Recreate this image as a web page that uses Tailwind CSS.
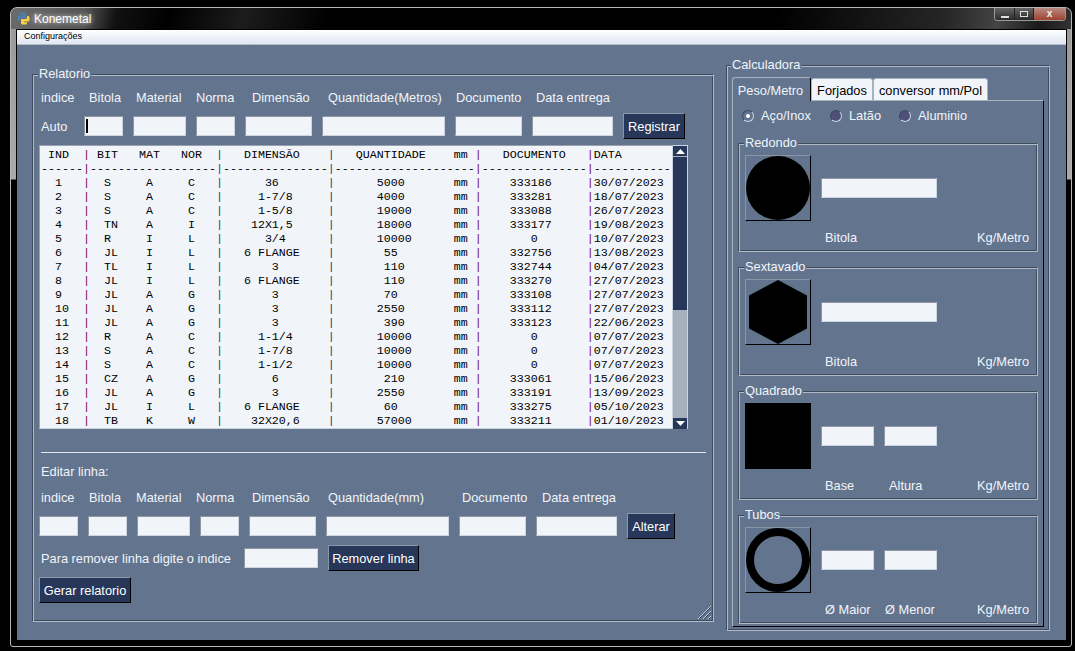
<!DOCTYPE html>
<html>
<head>
<meta charset="utf-8">
<script src="https://cdn.jsdelivr.net/npm/@tailwindcss/browser@4"></script>
</head>
<body class="bg-black">
<div class="w-[1075px] h-[651px] overflow-hidden bg-black pt-[7px] pl-[10px] font-['Liberation_Sans',sans-serif] text-[12.8px] text-slate-100">
  <div class="w-[1062px] h-[640px] border border-[#b5b5b5] rounded-t-[7px] rounded-b-[3px] px-[5px] pb-[4px] bg-[linear-gradient(180deg,#999_0,#aaa_171px,#000_172px)]">
    <!-- title bar -->
    <div class="-mx-[5px] h-[21px] rounded-t-[6px] flex items-center pl-[6px] bg-[linear-gradient(100deg,#6b6b6b_0%,#555_7%,#111_10%,#000_15%,#1c1c1c_22%,#000_30%,#000_72%,#262626_88%,#444_93%,#1a1a1a_97%,#333_100%)]">
      <svg width="13" height="13" viewBox="0 0 13 13" class="shrink-0">
        <path d="M4 .5h3.5A1.5 1.5 0 0 1 9 2v4H4.5A1.5 1.5 0 0 0 3 7.5V9H2A1.5 1.5 0 0 1 .5 7.5V5A1.5 1.5 0 0 1 2 3.5h4v-.7H3V1.5A1 1 0 0 1 4 .5z" fill="#4a7fb0"/>
        <path d="M9 12.5H5.5A1.5 1.5 0 0 1 4 11V7h4.5A1.5 1.5 0 0 0 10 5.500V4h1A1.500 1.500 0 0 1 12.500 5.500V8A1.500 1.500 0 0 1 11 9.500H7v.7h3v1.300A1 1 0 0 1 9 12.500z" fill="#f7d14a"/>
      </svg>
      <span class="ml-[4px] text-[12px] text-white [text-shadow:0_0_5px_#fff]">Konemetal</span>
      <div class="ml-auto mr-[5px] -mt-[8px] h-[13px] w-[72px] flex border border-t-0 border-[#999] rounded-b-[4px] overflow-hidden">
        <div class="w-[20px] flex items-end justify-center pb-[2px] bg-[linear-gradient(180deg,#666,#2a2a2a)] border-r border-[#222]"><div class="w-[8px] h-[2px] bg-[#ddd]"></div></div>
        <div class="w-[19px] flex items-center justify-center bg-[linear-gradient(180deg,#666,#2a2a2a)] border-r border-[#222]"><div class="w-[8px] h-[6px] border border-[#ddd]"></div></div>
        <div class="flex-1 flex items-center justify-center bg-[linear-gradient(180deg,#b98a80,#a04030)] text-[10px] leading-none font-bold text-[#eee]">x</div>
      </div>
    </div>
    <!-- client -->
    <div class="w-[1051px] h-[612px] border border-black bg-slate-500">
      <div class="h-[15px] flex items-center pl-[7px] text-[9px] text-black bg-[linear-gradient(180deg,#fff,#dfe6f3)] border-b border-[#b8bcc4]">Configurações</div>
      <div class="flex items-start pl-[15px]">

        <!-- Relatorio -->
        <div class="relative mt-[29px] w-[682px] h-[548px] border border-t-[#3f4a5a] border-l-[#3f4a5a] border-r-[#b0bac8] border-b-[#b0bac8] shadow-[inset_1px_1px_0_#b0bac8,inset_-1px_-1px_0_#3f4a5a] p-[1px] pl-[6px]">
          <span class="absolute left-[5px] -top-[9px] bg-slate-500 px-px leading-[16px]">Relatorio</span>

          <div class="flex h-[20px] pt-[2px] mt-[11px] ml-[2px] items-center">
            <span class="w-[48px]">indice</span><span class="w-[47px]">Bitola</span><span class="w-[60px]">Material</span><span class="w-[56px]">Norma</span><span class="w-[76px]">Dimensão</span><span class="w-[128px]">Quantidade(Metros)</span><span class="w-[80px]">Documento</span><span>Data entrega</span>
          </div>

          <div class="flex h-[26px] mt-[6px] items-center gap-[10px]">
            <span class="ml-[2px] w-[33px] pt-[2px]">Auto</span>
            <div class="w-[39px] h-[20px] border border-t-[#8f96a1] border-l-[#8f96a1] border-r-[#cbd5e1] border-b-[#cbd5e1] bg-slate-100 pl-px py-[2px]"><div class="w-[2px] h-full bg-black"></div></div>
            <div class="w-[53px] h-[20px] border border-t-[#8f96a1] border-l-[#8f96a1] border-r-[#cbd5e1] border-b-[#cbd5e1] bg-slate-100"></div>
            <div class="w-[39px] h-[20px] border border-t-[#8f96a1] border-l-[#8f96a1] border-r-[#cbd5e1] border-b-[#cbd5e1] bg-slate-100"></div>
            <div class="w-[67px] h-[20px] border border-t-[#8f96a1] border-l-[#8f96a1] border-r-[#cbd5e1] border-b-[#cbd5e1] bg-slate-100"></div>
            <div class="w-[123px] h-[20px] border border-t-[#8f96a1] border-l-[#8f96a1] border-r-[#cbd5e1] border-b-[#cbd5e1] bg-slate-100"></div>
            <div class="w-[67px] h-[20px] border border-t-[#8f96a1] border-l-[#8f96a1] border-r-[#cbd5e1] border-b-[#cbd5e1] bg-slate-100"></div>
            <div class="w-[81px] h-[20px] border border-t-[#8f96a1] border-l-[#8f96a1] border-r-[#cbd5e1] border-b-[#cbd5e1] bg-slate-100"></div>
            <button class="w-[62px] h-[26px] pt-[2px] border border-t-[#8a96a8] border-l-[#8a96a8] border-r-black border-b-black bg-[#27375a] text-white">Registrar</button>
          </div>

          <div class="flex mt-[6px] h-[284px]">
            <pre class="w-[634px] h-full overflow-hidden border border-t-[#98a2b0] border-l-[#98a2b0] border-r-[#cbd5e1] border-b-[#cbd5e1] bg-slate-100 pl-px pt-[2px] font-['Liberation_Mono',monospace] text-[11.67px] leading-[14px] text-black"> IND  <span class="text-[#7a0f4f]">|</span> BIT   MAT   NOR  <span class="text-[#0f4f6f]">|</span>   DIMENSÃO    <span class="text-[#0f4f6f]">|</span>   QUANTIDADE    mm <span class="text-[#7a0f4f]">|</span>   DOCUMENTO   <span class="text-[#7a0f4f]">|</span>DATA
------<span class="text-[#7a0f4f]">|</span>------------------<span class="text-[#0f4f6f]">|</span>---------------<span class="text-[#0f4f6f]">|</span>--------------------<span class="text-[#7a0f4f]">|</span>---------------<span class="text-[#7a0f4f]">|</span>-----------
  1   <span class="text-[#7a0f4f]">|</span>  S     A     C   <span class="text-[#0f4f6f]">|</span>      36       <span class="text-[#0f4f6f]">|</span>      5000       mm <span class="text-[#7a0f4f]">|</span>    333186     <span class="text-[#7a0f4f]">|</span>30/07/2023
  2   <span class="text-[#7a0f4f]">|</span>  S     A     C   <span class="text-[#0f4f6f]">|</span>     1-7/8     <span class="text-[#0f4f6f]">|</span>      4000       mm <span class="text-[#7a0f4f]">|</span>    333281     <span class="text-[#7a0f4f]">|</span>18/07/2023
  3   <span class="text-[#7a0f4f]">|</span>  S     A     C   <span class="text-[#0f4f6f]">|</span>     1-5/8     <span class="text-[#0f4f6f]">|</span>      19000      mm <span class="text-[#7a0f4f]">|</span>    333088     <span class="text-[#7a0f4f]">|</span>26/07/2023
  4   <span class="text-[#7a0f4f]">|</span>  TN    A     I   <span class="text-[#0f4f6f]">|</span>    12X1,5     <span class="text-[#0f4f6f]">|</span>      18000      mm <span class="text-[#7a0f4f]">|</span>    333177     <span class="text-[#7a0f4f]">|</span>19/08/2023
  5   <span class="text-[#7a0f4f]">|</span>  R     I     L   <span class="text-[#0f4f6f]">|</span>      3/4      <span class="text-[#0f4f6f]">|</span>      10000      mm <span class="text-[#7a0f4f]">|</span>       0       <span class="text-[#7a0f4f]">|</span>10/07/2023
  6   <span class="text-[#7a0f4f]">|</span>  JL    I     L   <span class="text-[#0f4f6f]">|</span>   6 FLANGE    <span class="text-[#0f4f6f]">|</span>       55        mm <span class="text-[#7a0f4f]">|</span>    332756     <span class="text-[#7a0f4f]">|</span>13/08/2023
  7   <span class="text-[#7a0f4f]">|</span>  TL    I     L   <span class="text-[#0f4f6f]">|</span>       3       <span class="text-[#0f4f6f]">|</span>       110       mm <span class="text-[#7a0f4f]">|</span>    332744     <span class="text-[#7a0f4f]">|</span>04/07/2023
  8   <span class="text-[#7a0f4f]">|</span>  JL    I     L   <span class="text-[#0f4f6f]">|</span>   6 FLANGE    <span class="text-[#0f4f6f]">|</span>       110       mm <span class="text-[#7a0f4f]">|</span>    333270     <span class="text-[#7a0f4f]">|</span>27/07/2023
  9   <span class="text-[#7a0f4f]">|</span>  JL    A     G   <span class="text-[#0f4f6f]">|</span>       3       <span class="text-[#0f4f6f]">|</span>       70        mm <span class="text-[#7a0f4f]">|</span>    333108     <span class="text-[#7a0f4f]">|</span>27/07/2023
  10  <span class="text-[#7a0f4f]">|</span>  JL    A     G   <span class="text-[#0f4f6f]">|</span>       3       <span class="text-[#0f4f6f]">|</span>      2550       mm <span class="text-[#7a0f4f]">|</span>    333112     <span class="text-[#7a0f4f]">|</span>27/07/2023
  11  <span class="text-[#7a0f4f]">|</span>  JL    A     G   <span class="text-[#0f4f6f]">|</span>       3       <span class="text-[#0f4f6f]">|</span>       390       mm <span class="text-[#7a0f4f]">|</span>    333123     <span class="text-[#7a0f4f]">|</span>22/06/2023
  12  <span class="text-[#7a0f4f]">|</span>  R     A     C   <span class="text-[#0f4f6f]">|</span>     1-1/4     <span class="text-[#0f4f6f]">|</span>      10000      mm <span class="text-[#7a0f4f]">|</span>       0       <span class="text-[#7a0f4f]">|</span>07/07/2023
  13  <span class="text-[#7a0f4f]">|</span>  S     A     C   <span class="text-[#0f4f6f]">|</span>     1-7/8     <span class="text-[#0f4f6f]">|</span>      10000      mm <span class="text-[#7a0f4f]">|</span>       0       <span class="text-[#7a0f4f]">|</span>07/07/2023
  14  <span class="text-[#7a0f4f]">|</span>  S     A     C   <span class="text-[#0f4f6f]">|</span>     1-1/2     <span class="text-[#0f4f6f]">|</span>      10000      mm <span class="text-[#7a0f4f]">|</span>       0       <span class="text-[#7a0f4f]">|</span>07/07/2023
  15  <span class="text-[#7a0f4f]">|</span>  CZ    A     G   <span class="text-[#0f4f6f]">|</span>       6       <span class="text-[#0f4f6f]">|</span>       210       mm <span class="text-[#7a0f4f]">|</span>    333061     <span class="text-[#7a0f4f]">|</span>15/06/2023
  16  <span class="text-[#7a0f4f]">|</span>  JL    A     G   <span class="text-[#0f4f6f]">|</span>       3       <span class="text-[#0f4f6f]">|</span>      2550       mm <span class="text-[#7a0f4f]">|</span>    333191     <span class="text-[#7a0f4f]">|</span>13/09/2023
  17  <span class="text-[#7a0f4f]">|</span>  JL    I     L   <span class="text-[#0f4f6f]">|</span>   6 FLANGE    <span class="text-[#0f4f6f]">|</span>       60        mm <span class="text-[#7a0f4f]">|</span>    333275     <span class="text-[#7a0f4f]">|</span>05/10/2023
  18  <span class="text-[#7a0f4f]">|</span>  TB    K     W   <span class="text-[#0f4f6f]">|</span>    32X20,6    <span class="text-[#0f4f6f]">|</span>      57000      mm <span class="text-[#7a0f4f]">|</span>    333211     <span class="text-[#7a0f4f]">|</span>01/10/2023</pre>
            <div class="w-[15px] h-full flex flex-col bg-[#a6b0be] border-r border-[#cbd5e1]">
              <div class="h-[11px] bg-[#27375a] border-t border-[#cbd5e1] flex items-center justify-center"><svg width="9" height="5"><path d="M0 5L4.500 0L9 5z" fill="#fff"/></svg></div>
              <div class="h-[153px] mt-px bg-[#27375a]"></div>
              <div class="flex-1"></div>
              <div class="h-[11px] bg-[#27375a] flex items-center justify-center"><svg width="9" height="5"><path d="M0 0L4.500 5L9 0z" fill="#fff"/></svg></div>
            </div>
          </div>

          <div class="mt-[23px] ml-[2px] w-[665px] h-px bg-slate-200"></div>
          <div class="h-[20px] pt-[2px] mt-[8px] ml-[2px] flex items-center">Editar linha:</div>

          <div class="flex h-[20px] pt-[2px] mt-[6px] ml-[2px] items-center">
            <span class="w-[48px]">indice</span><span class="w-[47px]">Bitola</span><span class="w-[60px]">Material</span><span class="w-[56px]">Norma</span><span class="w-[76px]">Dimensão</span><span class="w-[134px]">Quantidade(mm)</span><span class="w-[80px]">Documento</span><span>Data entrega</span>
          </div>

          <div class="flex h-[26px] mt-[6px] items-center gap-[10px]">
            <div class="w-[39px] h-[20px] border border-t-[#8f96a1] border-l-[#8f96a1] border-r-[#cbd5e1] border-b-[#cbd5e1] bg-slate-100"></div>
            <div class="w-[39px] h-[20px] border border-t-[#8f96a1] border-l-[#8f96a1] border-r-[#cbd5e1] border-b-[#cbd5e1] bg-slate-100"></div>
            <div class="w-[53px] h-[20px] border border-t-[#8f96a1] border-l-[#8f96a1] border-r-[#cbd5e1] border-b-[#cbd5e1] bg-slate-100"></div>
            <div class="w-[39px] h-[20px] border border-t-[#8f96a1] border-l-[#8f96a1] border-r-[#cbd5e1] border-b-[#cbd5e1] bg-slate-100"></div>
            <div class="w-[67px] h-[20px] border border-t-[#8f96a1] border-l-[#8f96a1] border-r-[#cbd5e1] border-b-[#cbd5e1] bg-slate-100"></div>
            <div class="w-[123px] h-[20px] border border-t-[#8f96a1] border-l-[#8f96a1] border-r-[#cbd5e1] border-b-[#cbd5e1] bg-slate-100"></div>
            <div class="w-[67px] h-[20px] border border-t-[#8f96a1] border-l-[#8f96a1] border-r-[#cbd5e1] border-b-[#cbd5e1] bg-slate-100"></div>
            <div class="w-[81px] h-[20px] border border-t-[#8f96a1] border-l-[#8f96a1] border-r-[#cbd5e1] border-b-[#cbd5e1] bg-slate-100"></div>
            <button class="w-[48px] h-[26px] pt-[2px] border border-t-[#8a96a8] border-l-[#8a96a8] border-r-black border-b-black bg-[#27375a] text-white">Alterar</button>
          </div>

          <div class="flex h-[26px] mt-[6px] items-center gap-[10px]">
            <span class="ml-[2px] w-[193px] pt-[2px] whitespace-nowrap">Para remover linha digite o indice</span>
            <div class="w-[74px] h-[20px] border border-t-[#8f96a1] border-l-[#8f96a1] border-r-[#cbd5e1] border-b-[#cbd5e1] bg-slate-100"></div>
            <button class="w-[91px] h-[26px] pt-[2px] border border-t-[#8a96a8] border-l-[#8a96a8] border-r-black border-b-black bg-[#27375a] text-white">Remover linha</button>
          </div>

          <button class="block mt-[6px] w-[92px] h-[26px] pt-[2px] border border-t-[#8a96a8] border-l-[#8a96a8] border-r-black border-b-black bg-[#27375a] text-white">Gerar relatorio</button>

          <svg width="15" height="15" viewBox="0 0 15 15" class="absolute right-[1px] bottom-[1px]">
            <path d="M1 14L14 1M6 14L14 6M11 14L14 11" stroke="#cbd5e1" stroke-width="1"/>
            <path d="M2 14L14 2M7 14L14 7M12 14L14 12" stroke="#334155" stroke-width="1"/>
          </svg>
        </div>

        <!-- Calculadora -->
        <div class="relative ml-[12px] mt-[20px] w-[324px] h-[566px] border border-t-[#3f4a5a] border-l-[#3f4a5a] border-r-[#b0bac8] border-b-[#b0bac8] shadow-[inset_1px_1px_0_#b0bac8,inset_-1px_-1px_0_#3f4a5a] pt-[11px] pl-[5px]">
          <span class="absolute left-[4px] -top-[9px] bg-slate-500 px-px leading-[16px]">Calculadora</span>

          <div class="flex h-[23px] items-end">
            <div class="w-[79px] h-[24px] pt-[2px] pr-[2px] -mb-px relative border border-b-0 border-t-[#a8b3c2] border-l-[#a8b3c2] border-r-black rounded-t-[3px] bg-slate-500 flex items-center justify-center">Peso/Metro</div>
            <div class="w-[62px] h-[22px] pt-[2px] border border-b-0 border-[#a8b3c2] rounded-t-[3px] bg-slate-100 text-black flex items-center justify-center">Forjados</div>
            <div class="w-[115px] h-[22px] pt-[2px] border border-b-0 border-[#a8b3c2] rounded-t-[3px] bg-slate-100 text-black flex items-center justify-center">conversor mm/Pol</div>
          </div>

          <div class="w-[312px] h-[527px] border border-t-[#a8b3c2] border-l-[#a8b3c2] border-r-black border-b-black pl-[5px]">
            <div class="h-[30px] flex items-center">
              <div class="ml-[4px] w-[12px] h-[12px] rounded-full border border-t-[#3f4a5a] border-l-[#3f4a5a] border-r-[#cbd5e1] border-b-[#cbd5e1] bg-slate-500 flex items-center justify-center"><div class="w-[4px] h-[4px] rounded-full bg-white"></div></div>
              <span class="ml-[7px] w-[69px]">Aço/Inox</span>
              <div class="w-[12px] h-[12px] rounded-full border border-t-[#3f4a5a] border-l-[#3f4a5a] border-r-[#cbd5e1] border-b-[#cbd5e1] bg-[#4f5078]"></div>
              <span class="ml-[7px] w-[50px]">Latão</span>
              <div class="w-[12px] h-[12px] rounded-full border border-t-[#3f4a5a] border-l-[#3f4a5a] border-r-[#cbd5e1] border-b-[#cbd5e1] bg-[#4f5078]"></div>
              <span class="ml-[7px]">Aluminio</span>
            </div>

            <!-- Redondo -->
            <div class="relative mt-[12px] w-[300px] h-[109px] border border-t-[#3f4a5a] border-l-[#3f4a5a] border-r-[#b0bac8] border-b-[#b0bac8] shadow-[inset_1px_1px_0_#b0bac8,inset_-1px_-1px_0_#3f4a5a] pt-[11px] pl-[6px]">
              <span class="absolute left-[5px] -top-[9px] bg-slate-500 px-px leading-[16px]">Redondo</span>
              <div class="flex items-center">
                <div class="w-[66px] h-[66px] border border-t-[#8a96a8] border-l-[#8a96a8] border-r-black border-b-black"><svg width="64" height="64" viewBox="0 0 64 64" class="block"><circle cx="32" cy="32" r="32" fill="#000"/></svg></div>
                <div class="ml-[10px] w-[116px] h-[20px] border border-t-[#8f96a1] border-l-[#8f96a1] border-r-[#cbd5e1] border-b-[#cbd5e1] bg-slate-100"></div>
              </div>
              <div class="flex mt-[7px] ml-[80px] mr-[8px] h-[20px] items-center justify-between"><span>Bitola</span><span>Kg/Metro</span></div>
            </div>

            <!-- Sextavado -->
            <div class="relative mt-[15px] w-[300px] h-[109px] border border-t-[#3f4a5a] border-l-[#3f4a5a] border-r-[#b0bac8] border-b-[#b0bac8] shadow-[inset_1px_1px_0_#b0bac8,inset_-1px_-1px_0_#3f4a5a] pt-[11px] pl-[6px]">
              <span class="absolute left-[5px] -top-[9px] bg-slate-500 px-px leading-[16px]">Sextavado</span>
              <div class="flex items-center">
                <div class="w-[66px] h-[66px] border border-t-[#8a96a8] border-l-[#8a96a8] border-r-black border-b-black"><svg width="64" height="64" viewBox="0 0 64 64" class="block"><path d="M32 0L61 15.500V48.500L32 64L3 48.500V15.500z" fill="#000"/></svg></div>
                <div class="ml-[10px] w-[116px] h-[20px] border border-t-[#8f96a1] border-l-[#8f96a1] border-r-[#cbd5e1] border-b-[#cbd5e1] bg-slate-100"></div>
              </div>
              <div class="flex mt-[7px] ml-[80px] mr-[8px] h-[20px] items-center justify-between"><span>Bitola</span><span>Kg/Metro</span></div>
            </div>

            <!-- Quadrado -->
            <div class="relative mt-[15px] w-[300px] h-[109px] border border-t-[#3f4a5a] border-l-[#3f4a5a] border-r-[#b0bac8] border-b-[#b0bac8] shadow-[inset_1px_1px_0_#b0bac8,inset_-1px_-1px_0_#3f4a5a] pt-[11px] pl-[6px]">
              <span class="absolute left-[5px] -top-[9px] bg-slate-500 px-px leading-[16px]">Quadrado</span>
              <div class="flex items-center">
                <div class="w-[66px] h-[66px] bg-black"></div>
                <div class="ml-[10px] w-[53px] h-[20px] border border-t-[#8f96a1] border-l-[#8f96a1] border-r-[#cbd5e1] border-b-[#cbd5e1] bg-slate-100"></div>
                <div class="ml-[10px] w-[53px] h-[20px] border border-t-[#8f96a1] border-l-[#8f96a1] border-r-[#cbd5e1] border-b-[#cbd5e1] bg-slate-100"></div>
              </div>
              <div class="flex mt-[7px] ml-[80px] mr-[8px] h-[20px] items-center"><span class="w-[64px]">Base</span><span>Altura</span><span class="ml-auto">Kg/Metro</span></div>
            </div>

            <!-- Tubos -->
            <div class="relative mt-[15px] w-[300px] h-[109px] border border-t-[#3f4a5a] border-l-[#3f4a5a] border-r-[#b0bac8] border-b-[#b0bac8] shadow-[inset_1px_1px_0_#b0bac8,inset_-1px_-1px_0_#3f4a5a] pt-[11px] pl-[6px]">
              <span class="absolute left-[5px] -top-[9px] bg-slate-500 px-px leading-[16px]">Tubos</span>
              <div class="flex items-center">
                <div class="w-[66px] h-[66px] border border-t-[#8a96a8] border-l-[#8a96a8] border-r-black border-b-black"><svg width="64" height="64" viewBox="0 0 64 64" class="block"><circle cx="32" cy="32" r="28" fill="none" stroke="#000" stroke-width="8"/></svg></div>
                <div class="ml-[10px] w-[53px] h-[20px] border border-t-[#8f96a1] border-l-[#8f96a1] border-r-[#cbd5e1] border-b-[#cbd5e1] bg-slate-100"></div>
                <div class="ml-[10px] w-[53px] h-[20px] border border-t-[#8f96a1] border-l-[#8f96a1] border-r-[#cbd5e1] border-b-[#cbd5e1] bg-slate-100"></div>
              </div>
              <div class="flex mt-[7px] ml-[80px] mr-[8px] h-[20px] items-center"><span class="w-[60px]">Ø Maior</span><span>Ø Menor</span><span class="ml-auto">Kg/Metro</span></div>
            </div>
          </div>
        </div>

      </div>
    </div>
  </div>
</div>
</body>
</html>
